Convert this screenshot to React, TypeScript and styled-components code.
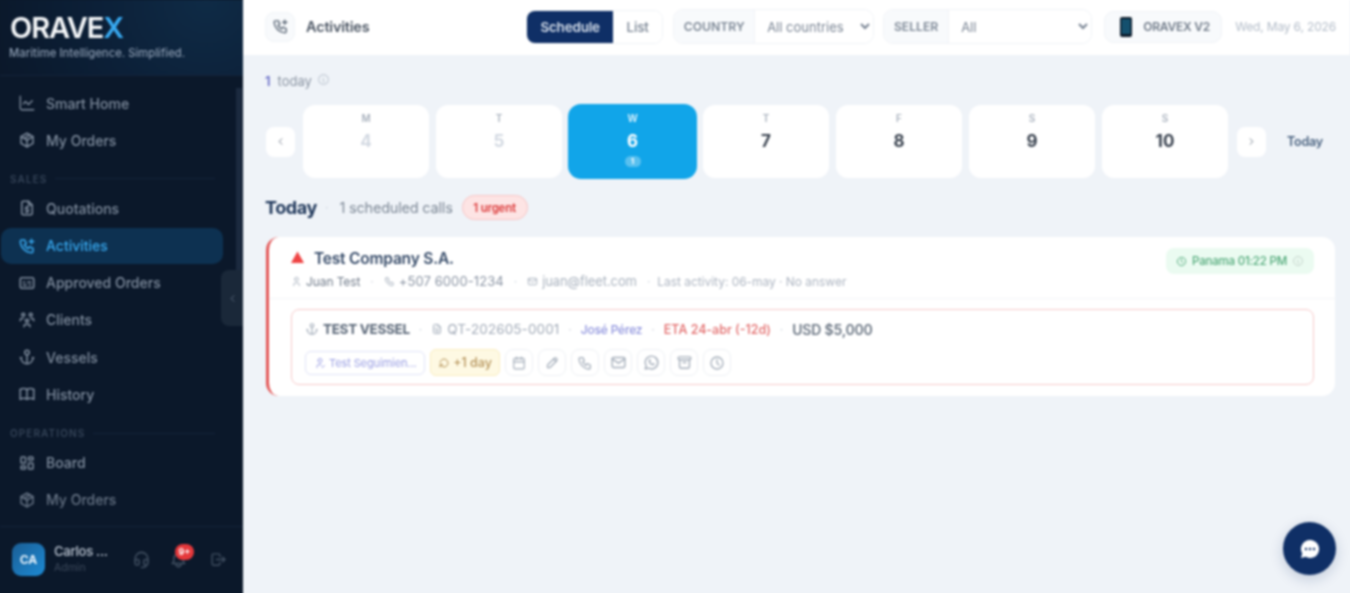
import React from 'react'
import styled, { createGlobalStyle } from 'styled-components'
import { ChartLine, Captions, Calendar } from 'lucide-react'
import {
  TbPackage,
  TbFileDollar,
  TbPhonePlus,
  TbUsersGroup,
  TbAnchor,
  TbBook,
  TbLayoutDashboard,
  TbHeadset,
  TbBell,
  TbLogout,
  TbChevronLeft,
  TbChevronRight,
  TbInfoCircle,
  TbUser,
  TbPhone,
  TbMail,
  TbFileText,
  TbClock,
  TbPencil,
  TbBrandWhatsapp,
  TbArchive,
  TbRotateClockwise,
  TbUserCheck,
} from 'react-icons/tb'

const GlobalStyle = createGlobalStyle`
  html, body { margin: 0; padding: 0; height: 100%; overflow: hidden; }
  body { font-family: Inter, "Open Sans", sans-serif; background: #eff3f8; }
  * { box-sizing: border-box; }
`

const salesItems = [
  { label: 'Quotations', icon: TbFileDollar },
  { label: 'Activities', icon: TbPhonePlus, active: true },
  { label: 'Approved Orders', icon: Captions },
  { label: 'Clients', icon: TbUsersGroup },
  { label: 'Vessels', icon: TbAnchor },
  { label: 'History', icon: TbBook },
]

const days = [
  { letter: 'M', num: 4, past: true },
  { letter: 'T', num: 5, past: true },
  { letter: 'W', num: 6, selected: true, count: 1 },
  { letter: 'T', num: 7 },
  { letter: 'F', num: 8 },
  { letter: 'S', num: 9 },
  { letter: 'S', num: 10 },
]

const actions = [
  { icon: Calendar, size: 14 },
  { icon: TbPencil, size: 15 },
  { icon: TbPhone, size: 16 },
  { icon: TbMail, size: 17 },
  { icon: TbBrandWhatsapp, size: 17 },
  { icon: TbArchive, size: 17 },
  { icon: TbClock, size: 16 },
]

const App = () => {
  return (
    <Page>
      <GlobalStyle />
      <Sidebar>
        <Brand>
          <Logo>
            ORAVE<span>X</span>
          </Logo>
          <Tagline>Maritime Intelligence. Simplified.</Tagline>
        </Brand>
        <Nav>
          <NavItem>
            <ChartLine size={18} strokeWidth={1.75} />
            Smart Home
          </NavItem>
          <NavItem>
            <TbPackage size={18} />
            My Orders
          </NavItem>
          <Section>SALES</Section>
          {salesItems.map((item) => (
            <NavItem key={item.label} $active={item.active}>
              <item.icon size={18} />
              {item.label}
            </NavItem>
          ))}
          <Section>OPERATIONS</Section>
          <NavItem>
            <TbLayoutDashboard size={18} />
            Board
          </NavItem>
          <NavItem>
            <TbPackage size={18} />
            My Orders
          </NavItem>
        </Nav>
        <ScrollThumb />
        <Collapse>
          <TbChevronLeft size={11} />
        </Collapse>
        <UserBar>
          <Avatar>CA</Avatar>
          <UserInfo>
            <UserName>Carlos ...</UserName>
            <UserRole>Admin</UserRole>
          </UserInfo>
          <UserIcons>
            <TbHeadset size={19} />
            <BellWrap>
              <TbBell size={19} />
              <BellBadge>9+</BellBadge>
            </BellWrap>
            <LogoutWrap>
              <TbLogout size={17} />
            </LogoutWrap>
          </UserIcons>
        </UserBar>
      </Sidebar>

      <Main>
        <TopBar>
          <TitleIcon>
            <TbPhonePlus size={17} />
          </TitleIcon>
          <Title>Activities</Title>
          <Segmented>
            <Segment $on>Schedule</Segment>
            <Segment>List</Segment>
          </Segmented>
          <FilterGroup $width={201}>
            <FilterLabel $width={81}>COUNTRY</FilterLabel>
            <FilterSelect defaultValue="all">
              <option value="all">All countries</option>
            </FilterSelect>
          </FilterGroup>
          <FilterGroup $width={209}>
            <FilterLabel $width={65}>SELLER</FilterLabel>
            <FilterSelect defaultValue="all">
              <option value="all">All</option>
            </FilterSelect>
          </FilterGroup>
          <DevicePill>
            <svg width="12" height="20" viewBox="0 0 12 20">
              <rect width="12" height="20" rx="2" fill="#0d1b2a" />
              <rect x="1.5" y="2" width="9" height="15" fill="#14506e" />
            </svg>
            ORAVEX V2
          </DevicePill>
          <DateText>Wed, May 6, 2026</DateText>
        </TopBar>

        <Content>
          <Counter>
            <b>1</b> today <TbInfoCircle size={13} />
          </Counter>
          <CalendarRow>
            <ArrowBtn>
              <TbChevronLeft size={11} />
            </ArrowBtn>
            <Days>
              {days.map((d) => (
                <Day key={d.num} $selected={d.selected}>
                  <DayLetter $selected={d.selected}>{d.letter}</DayLetter>
                  <DayNum $selected={d.selected} $past={d.past}>
                    {d.num}
                  </DayNum>
                  {d.count && <DayCount>{d.count}</DayCount>}
                </Day>
              ))}
            </Days>
            <ArrowBtn>
              <TbChevronRight size={11} />
            </ArrowBtn>
            <TodayBtn>Today</TodayBtn>
          </CalendarRow>

          <Heading>
            <HeadingTitle>Today</HeadingTitle>
            <HeadingDot>·</HeadingDot>
            <HeadingSub>1 scheduled calls</HeadingSub>
            <UrgentPill>1 urgent</UrgentPill>
          </Heading>

          <Card>
            <CardTop>
              <div>
                <CompanyRow>
                  <svg width="13" height="12" viewBox="0 0 13 12">
                    <path d="M6.5 0.5 L13 12 L0 12 Z" fill="#ef4444" />
                  </svg>
                  <Company>Test Company S.A.</Company>
                </CompanyRow>
                <ContactRow>
                  <TbUser size={11} />
                  <ContactName>Juan Test</ContactName>
                  <Dot $gap={6}>·</Dot>
                  <TbPhone size={11} />
                  <ContactPhone>+507 6000-1234</ContactPhone>
                  <Dot $gap={6}>·</Dot>
                  <TbMail size={11} />
                  <ContactMail>juan@fleet.com</ContactMail>
                  <Dot $gap={6}>·</Dot>
                  <LastActivity>Last activity: 06-may · No answer</LastActivity>
                </ContactRow>
              </div>
              <TimePill>
                <TbClock size={11} />
                Panama 01:22 PM
                <TbInfoCircle size={12} color="#c4d3cb" />
              </TimePill>
            </CardTop>
            <CardBody>
              <Order>
                <OrderRow>
                  <TbAnchor size={14} color="#a3adba" />
                  <Vessel>TEST VESSEL</Vessel>
                  <Dot $gap={5}>·</Dot>
                  <TbFileText size={12} color="#a3adba" />
                  <Quote>QT-202605-0001</Quote>
                  <Dot $gap={5}>·</Dot>
                  <Agent>José Pérez</Agent>
                  <Dot $gap={5}>·</Dot>
                  <Eta>ETA 24-abr (-12d)</Eta>
                  <Dot $gap={5}>·</Dot>
                  <Amount>USD $5,000</Amount>
                </OrderRow>
                <ActionRow>
                  <FollowChip>
                    <TbUserCheck size={12} />
                    Test Seguimien...
                  </FollowChip>
                  <DelayChip>
                    <TbRotateClockwise size={12} />
                    +1 day
                  </DelayChip>
                  {actions.map((a, i) => (
                    <ActionBtn key={i}>
                      <a.icon size={a.size} />
                    </ActionBtn>
                  ))}
                </ActionRow>
              </Order>
            </CardBody>
          </Card>
        </Content>

        <ChatButton>
          <svg width="24" height="24" viewBox="0 0 24 24">
            <path
              d="M12 3a9 9 0 0 0-7.8 13.5L3 21l4.6-1.2A9 9 0 1 0 12 3Z"
              fill="#fff"
            />
            <circle cx="8" cy="12" r="1.2" fill="#0f2f66" />
            <circle cx="12" cy="12" r="1.2" fill="#0f2f66" />
            <circle cx="16" cy="12" r="1.2" fill="#0f2f66" />
          </svg>
        </ChatButton>
      </Main>
    </Page>
  )
}

export default App

// 4px of bleed round the page so the blur does not wash out the window edges
const Page = styled.div`
  display: flex;
  width: calc(100vw + 8px);
  height: calc(100vh + 8px);
  margin: -4px;
  padding: 4px;
  overflow: hidden;
  filter: blur(1px);
  background:
    linear-gradient(to right, #0b182a 247px, transparent 247px),
    linear-gradient(#fff 4px, #eff3f8 4px);
`
const Sidebar = styled.aside`
  position: relative;
  width: 243px;
  flex: none;
  display: flex;
  flex-direction: column;
  background: #0b182a;
`
const Brand = styled.div`
  height: 76px;
  padding: 13px 9px 0;
  border-bottom: 1px solid #14233a;
  background: radial-gradient(circle at 85% 0, #0f2b46 0, #0c2038 50%, #0b182a 100%);
`
const Logo = styled.div`
  font-size: 29px;
  line-height: 30px;
  font-weight: 600;
  letter-spacing: -1.1px;
  color: #f4f6f8;
  padding-left: 1px;
  span {
    color: #38a9f0;
  }
`
const Tagline = styled.div`
  margin-top: 2px;
  font-size: 11.2px;
  letter-spacing: 0.05px;
  line-height: 16px;
  font-weight: 500;
  white-space: nowrap;
  color: #8b9bb0;
`
const Nav = styled.nav`
  position: relative;
  flex: 1;
  padding: 9px 0 0 1px;
  overflow: hidden;
  &::after {
    content: '';
    position: absolute;
    left: 0;
    right: 0;
    bottom: 0;
    height: 50px;
    background: linear-gradient(rgba(11, 24, 42, 0), rgba(11, 24, 42, 0.45));
  }
`
const NavItem = styled.div<{ $active?: boolean }>`
  display: flex;
  align-items: center;
  gap: 10px;
  width: 222px;
  height: 36px;
  margin-bottom: 1.2px;
  padding-left: 17px;
  border-radius: 10px;
  font-size: 14px;
  font-weight: 500;
  color: ${({ $active }) => ($active ? '#38a9f0' : '#7f8c9d')};
  background: ${({ $active }) => ($active ? '#0d3151' : 'transparent')};
  svg {
    flex: none;
  }
`
const Section = styled.div`
  display: flex;
  align-items: center;
  gap: 8px;
  width: 214px;
  height: 31px;
  padding: 8px 0 0 9px;
  font-size: 10px;
  font-weight: 600;
  letter-spacing: 1.1px;
  color: #364559;
  &::after {
    content: '';
    flex: 1;
    height: 1px;
    background: #14233a;
  }
`
const ScrollThumb = styled.div`
  position: absolute;
  right: 1px;
  top: 88px;
  width: 6px;
  height: 200px;
  background: #1b2a3f;
`
const Collapse = styled.div`
  position: absolute;
  top: 270px;
  right: 0;
  width: 22px;
  height: 56px;
  border-radius: 8px 0 0 8px;
  background: #1a2839;
  display: flex;
  align-items: center;
  justify-content: center;
  color: #5f6f82;
`
const UserBar = styled.div`
  display: flex;
  align-items: center;
  height: 67px;
  padding: 0 16px 2px 12px;
  border-top: 1px solid #14233a;
  background: #0b182a;
  z-index: 1;
`
const Avatar = styled.div`
  width: 33px;
  height: 33px;
  border-radius: 9px;
  flex: none;
  display: flex;
  align-items: center;
  justify-content: center;
  font-size: 12px;
  font-weight: 700;
  color: #e6f2fb;
  background: linear-gradient(135deg, #1b5e95, #1d8ad4);
`
const UserInfo = styled.div`
  margin-left: 9px;
  width: 82px;
`
const UserName = styled.div`
  font-size: 13px;
  line-height: 17px;
  font-weight: 600;
  letter-spacing: -0.3px;
  color: #a9b3c0;
`
const UserRole = styled.div`
  font-size: 10.5px;
  line-height: 15px;
  color: #3d4a5c;
`
const UserIcons = styled.div`
  display: flex;
  align-items: center;
  gap: 18px;
  color: #3f4d5f;
`
const BellWrap = styled.div`
  position: relative;
  display: flex;
`
const LogoutWrap = styled.div`
  display: flex;
  margin-left: 4px;
`
const BellBadge = styled.span`
  position: absolute;
  top: -6px;
  right: -6px;
  min-width: 19px;
  height: 16px;
  border-radius: 9px;
  display: flex;
  align-items: center;
  justify-content: center;
  font-size: 9px;
  font-weight: 700;
  color: #fff;
  background: #e5383b;
`
const Main = styled.main`
  position: relative;
  flex: 1;
  min-width: 0;
  display: flex;
  flex-direction: column;
  background: #eff3f8;
`
const TopBar = styled.header`
  height: 55px;
  flex: none;
  display: flex;
  align-items: center;
  padding: 0 14px 2px 22px;
  background: #fff;
`
const TitleIcon = styled.div`
  width: 30px;
  height: 30px;
  border-radius: 9px;
  display: flex;
  align-items: center;
  justify-content: center;
  color: #5b6776;
  background: #f8fafc;
  border: 1px solid #f1f4f8;
`
const Title = styled.h1`
  flex: 1;
  margin: 0 0 0 11px;
  font-size: 14.5px;
  font-weight: 600;
  letter-spacing: -0.2px;
  color: #4b5563;
`
const Segmented = styled.div`
  display: flex;
  height: 34px;
  margin-right: 10px;
  border: 1px solid #f0f3f7;
  border-radius: 9px;
  overflow: hidden;
`
const Segment = styled.div<{ $on?: boolean }>`
  display: flex;
  align-items: center;
  justify-content: center;
  width: ${({ $on }) => ($on ? '86px' : '49px')};
  font-size: 13.5px;
  font-weight: ${({ $on }) => ($on ? 600 : 500)};
  letter-spacing: -0.2px;
  color: ${({ $on }) => ($on ? '#d5deea' : '#7a8594')};
  background: ${({ $on }) => ($on ? '#0f2f66' : '#fff')};
`
const FilterGroup = styled.div<{ $width: number }>`
  display: flex;
  width: ${({ $width }) => $width}px;
  height: 35px;
  margin-right: 9px;
  border: 1px solid #f0f3f7;
  border-radius: 10px;
  overflow: hidden;
`
const FilterLabel = styled.div<{ $width: number }>`
  flex: none;
  width: ${({ $width }) => $width}px;
  display: flex;
  align-items: center;
  justify-content: center;
  font-size: 12.2px;
  font-weight: 600;
  color: #7d8896;
  background: #f8fafc;
  border-right: 1px solid #f0f3f7;
`
const FilterSelect = styled.select`
  flex: 1;
  min-width: 0;
  border: 0;
  outline: 0;
  padding-left: 8px;
  font-family: inherit;
  font-size: 13px;
  color: #7a8594;
  background: #fff;
`
const DevicePill = styled.div`
  display: flex;
  align-items: center;
  gap: 11px;
  width: 118px;
  height: 32px;
  margin: 0 13px 0 3px;
  padding-left: 15px;
  border: 1px solid #f0f3f7;
  border-radius: 10px;
  font-size: 12px;
  font-weight: 600;
  letter-spacing: -0.2px;
  white-space: nowrap;
  color: #6f7a88;
  background: #f8fafc;
`
const DateText = styled.div`
  font-size: 12px;
  white-space: nowrap;
  letter-spacing: -0.16px;
  color: #b4bdc9;
`
const Content = styled.div`
  flex: 1;
  padding: 17px 15px 0 22px;
`
const Counter = styled.div`
  display: flex;
  align-items: center;
  gap: 5px;
  height: 18px;
  font-size: 13px;
  color: #8b95a3;
  b {
    font-weight: 600;
    color: #6a6fc8;
    margin-right: 2px;
  }
  svg {
    color: #c2cad4;
    margin-bottom: 3px;
  }
`
const CalendarRow = styled.div`
  display: flex;
  align-items: center;
  margin-top: 14px;
  padding-left: 1px;
  height: 75px;
`
const ArrowBtn = styled.div`
  flex: none;
  width: 29px;
  height: 30px;
  border-radius: 8px;
  display: flex;
  align-items: center;
  justify-content: center;
  color: #6b7685;
  background: #fff;
`
const Days = styled.div`
  display: flex;
  align-items: center;
  gap: 7px;
  margin: 0 9px 0 8px;
`
const Day = styled.div<{ $selected?: boolean }>`
  display: flex;
  flex-direction: column;
  align-items: center;
  padding-top: ${({ $selected }) => ($selected ? '8px' : '7px')};
  width: ${({ $selected }) => ($selected ? '129px' : '126px')};
  margin: ${({ $selected }) => ($selected ? '0 -1px' : '0')};
  height: ${({ $selected }) => ($selected ? '75px' : '73px')};
  border-radius: ${({ $selected }) => ($selected ? '13px' : '12px')};
  background: ${({ $selected }) => ($selected ? '#11a5e9' : '#fff')};
`
const DayLetter = styled.div<{ $selected?: boolean }>`
  font-size: 10px;
  line-height: 12px;
  font-weight: 600;
  color: ${({ $selected }) => ($selected ? '#e2f4fd' : '#a8b1bd')};
`
const DayNum = styled.div<{ $selected?: boolean; $past?: boolean }>`
  margin-top: 6px;
  font-size: 17px;
  line-height: 22px;
  font-weight: 700;
  color: ${({ $selected, $past }) =>
    $selected ? '#fff' : $past ? '#d3d9e2' : '#3a4350'};
`
const DayCount = styled.div`
  margin-top: 4px;
  width: 16px;
  height: 11px;
  border-radius: 6px;
  text-align: center;
  font-size: 8px;
  line-height: 11px;
  font-weight: 700;
  color: #fff;
  background: rgba(255, 255, 255, 0.3);
`
const TodayBtn = styled.div`
  margin-left: 21px;
  font-size: 12.5px;
  font-weight: 600;
  letter-spacing: -0.2px;
  color: #48617f;
`
const Heading = styled.div`
  display: flex;
  align-items: center;
  margin-top: 16px;
  height: 25px;
`
const HeadingTitle = styled.h2`
  margin: 0;
  font-size: 18px;
  font-weight: 700;
  letter-spacing: -0.4px;
  color: #21395c;
`
const HeadingDot = styled.span`
  color: #cbd2dc;
  font-size: 12px;
  margin: 0 11px 0 8px;
`
const Dot = styled.span<{ $gap: number }>`
  color: #cbd2dc;
  font-size: 12px;
  margin: 0 ${({ $gap }) => $gap}px;
`
const HeadingSub = styled.span`
  font-size: 14.5px;
  letter-spacing: -0.2px;
  color: #7d8896;
`
const UrgentPill = styled.span`
  margin-left: 9px;
  display: flex;
  align-items: center;
  justify-content: center;
  width: 66px;
  height: 25px;
  border-radius: 13px;
  font-size: 11.5px;
  font-weight: 600;
  letter-spacing: -0.2px;
  color: #dc3c3c;
  background: #fde4e4;
  border: 1px solid #f8c5c5;
`
const Card = styled.section`
  margin: 17px 0 0 1px;
  height: 159px;
  border-left: 3px solid #e35656;
  border-radius: 13px;
  background: #fff;
  overflow: hidden;
`
const CardTop = styled.div`
  display: flex;
  justify-content: space-between;
  height: 62px;
  padding: 11px 21px 0 22px;
  border-bottom: 1px solid #f3f5f8;
`
const CompanyRow = styled.div`
  display: flex;
  align-items: center;
  gap: 10px;
  height: 20px;
  svg {
    margin-bottom: 3px;
  }
`
const Company = styled.div`
  font-size: 15.5px;
  font-weight: 600;
  letter-spacing: -0.2px;
  color: #354a68;
`
const ContactRow = styled.div`
  display: flex;
  align-items: center;
  gap: 4px;
  margin-top: 5px;
  height: 16px;
  font-size: 12px;
  letter-spacing: -0.1px;
  color: #a3adba;
`
const ContactName = styled.span`
  color: #717c8b;
`
const ContactPhone = styled.span`
  font-size: 13px;
  letter-spacing: 0.1px;
  color: #8a94a3;
`
const ContactMail = styled.span`
  font-size: 13px;
  color: #aab3bf;
`
const LastActivity = styled.span`
  margin-left: -3px;
  letter-spacing: -0.04px;
  color: #aeb6c2;
`
const TimePill = styled.div`
  display: flex;
  align-items: center;
  justify-content: center;
  gap: 5px;
  width: 148px;
  height: 26px;
  border-radius: 8px;
  font-size: 11.5px;
  font-weight: 500;
  letter-spacing: -0.2px;
  color: #4fa878;
  background: #ebfbf1;
`
const CardBody = styled.div`
  padding: 10px 21px 0 22px;
`
const Order = styled.div`
  height: 76px;
  padding: 10px 13px 0;
  border: 1px solid #f7caca;
  border-radius: 8px;
`
const OrderRow = styled.div`
  display: flex;
  align-items: center;
  gap: 4px;
  height: 18px;
  white-space: nowrap;
`
const Vessel = styled.span`
  font-size: 13.5px;
  font-weight: 700;
  letter-spacing: -0.3px;
  color: #5a6778;
`
const Quote = styled.span`
  font-size: 13.5px;
  letter-spacing: 0.1px;
  color: #a2abb8;
`
const Agent = styled.span`
  font-size: 12px;
  font-weight: 500;
  letter-spacing: -0.2px;
  color: #8d92dd;
`
const Eta = styled.span`
  font-size: 12.5px;
  font-weight: 500;
  color: #e26a6a;
`
const Amount = styled.span`
  font-size: 14px;
  font-weight: 600;
  letter-spacing: -0.2px;
  color: #6b7684;
`
const ActionRow = styled.div`
  display: flex;
  align-items: center;
  gap: 5px;
  margin-top: 11px;
`
const FollowChip = styled.div`
  display: flex;
  align-items: center;
  gap: 3px;
  width: 120px;
  height: 24px;
  padding-left: 8px;
  border: 1px solid #e1e3f8;
  border-radius: 6px;
  font-size: 11px;
  white-space: nowrap;
  letter-spacing: -0.1px;
  color: #9ca1e4;
`
const DelayChip = styled.div`
  display: flex;
  align-items: center;
  justify-content: center;
  gap: 3px;
  width: 70px;
  height: 27px;
  border: 1px solid #fbeec0;
  border-radius: 6px;
  font-size: 12.5px;
  font-weight: 500;
  color: #b5935a;
  background: #fef9e3;
`
const ActionBtn = styled.div`
  width: 28px;
  height: 27px;
  border: 1px solid #eef1f5;
  border-radius: 8px;
  display: flex;
  align-items: center;
  justify-content: center;
  color: #a6afbb;
`
const ChatButton = styled.div`
  position: absolute;
  right: 14px;
  bottom: 18px;
  width: 53px;
  height: 53px;
  border-radius: 50%;
  display: flex;
  align-items: center;
  justify-content: center;
  background: #0f2f66;
  box-shadow: 0 4px 14px rgba(15, 47, 102, 0.2);
`
